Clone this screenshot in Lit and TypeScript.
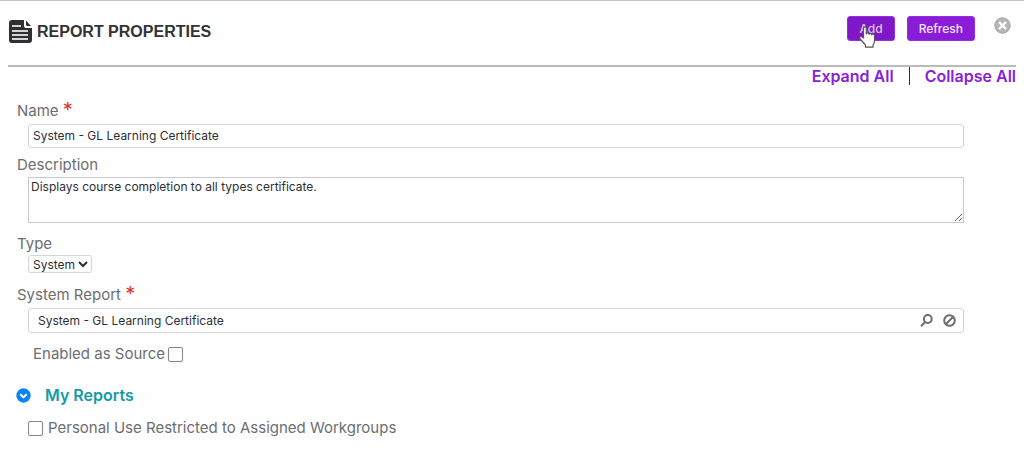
import { LitElement, html, css } from "lit";
import { customElement, state } from "lit/decorators.js";

@customElement("app-root")
class AppRoot extends LitElement {
  @state() private open = true;

  static styles = css`
    :host {
      display: block;
      min-height: 100vh;
      box-sizing: border-box;
      border-top: 1px solid #c8c8c8;
      background: #fefefe;
      color: #6c6e72;
      font-family: Inter, "Liberation Sans", sans-serif;
      font-size: 15px;
      line-height: 18px;
    }
    * { box-sizing: border-box; }
    button, input, textarea, select { font-family: inherit; margin: 0; }
    svg { display: block; }
    .header {
      display: flex;
      align-items: flex-start;
      margin: 0 8px;
      padding: 15px 4px 21px 0;
      border-bottom: 2px solid #bababa;
    }
    .title {
      display: flex;
      align-items: center;
      gap: 4px;
      flex: 1;
      margin: 3px 0 0;
      color: #333336;
      font: bold 16px/25px "Liberation Sans", Arial, sans-serif;
    }
    .actions { display: flex; align-items: flex-start; gap: 12px; }
    .btn {
      position: relative;
      height: 25px;
      padding: 0 11px;
      border: 1px solid #9330e6;
      border-radius: 3px;
      background: #8a1cd8;
      color: #f4e6ff;
      font-size: 12px;
      font-weight: 500;
    }
    .btn.pressed { background: #7f18c6; color: #dcc3f0; }
    .pointer { position: absolute; left: 10px; top: 8px; }
    .icon-btn {
      padding: 0;
      border: 0;
      background: none;
      color: #6e6e6e;
    }
    .close { margin: 1px 1px 0 7px; }
    .links {
      display: flex;
      justify-content: flex-end;
      margin-right: 8px;
      font-size: 16px;
      font-weight: 600;
      line-height: 18px;
    }
    .links a { color: #8722d6; text-decoration: none; }
    .links a + a { margin-left: 15px; padding-left: 15px; border-left: 1px solid #17375e; }
    .form { padding: 17px 60px 16px 17px; }
    .label { display: block; }
    .req {
      color: #d9342b;
      font: 20px/16px Inter, "Liberation Sans", sans-serif;
      vertical-align: top;
    }
    .control {
      display: block;
      width: calc(100% - 11px);
      margin-left: 11px;
      border: 1px solid #d4d5d8;
      border-radius: 3px;
      background: #fff;
      color: #2d2f36;
      font-size: 12px;
      outline: none;
    }
    .name { height: 24px; margin-top: 4px; margin-bottom: 8px; padding: 0 4px 2px; }
    .desc {
      height: 46px;
      margin-top: 3px;
      margin-bottom: 12px;
      padding: 1px 2px;
      border-color: #c9cacd;
      border-radius: 0;
      line-height: 16px;
      resize: vertical;
    }
    .type { width: 64px; height: 18px; margin-top: 2px; margin-bottom: 13px; padding: 0; }
    .lookup {
      display: flex;
      align-items: center;
      gap: 10px;
      height: 25px;
      margin-top: 4px;
      padding: 0 7px 0 9px;
    }
    .lookup input {
      flex: 1;
      min-width: 0;
      padding: 0;
      border: 0;
      background: none;
      color: inherit;
      font-size: 12px;
      outline: none;
    }
    .check { display: flex; align-items: center; }
    .check input {
      appearance: none;
      width: 15px;
      height: 15px;
      border: 1px solid #85868a;
      border-radius: 2px;
      background: #fff;
    }
    .check input:checked { background: #8a1cd8; }
    .source { gap: 3px; margin: 12px 0 0 16px; }
    .section {
      display: flex;
      align-items: center;
      gap: 14px;
      margin: 23px 0 15px -1px;
      font-size: 16px;
      line-height: 18px;
      font-weight: 600;
      color: #159ba5;
    }
    .personal { gap: 5px; margin-left: 11px; }
  `;

  render() {
    return html`
      <header class="header">
        <h1 class="title">
          <svg width="25" height="25" viewBox="0 0 25 25">
            <path fill="#303033" d="M4 1h12v6q0 2 2 2h6v12q0 3-3 3H4q-3 0-3-3V4q0-3 3-3z" />
            <path fill="#303033" d="M18 1.500l5 5.500h-3.500q-1.500 0-1.500-1.500z" />
            <path stroke="#d4d4d4" stroke-width="2" d="M4 7h9M4 12h16M4 16h16M4 20h16" />
          </svg>
          REPORT PROPERTIES
        </h1>
        <div class="actions">
          <button class="btn pressed" type="button">
            Add
            <svg class="pointer" width="18" height="24" viewBox="0 0 18 24" aria-hidden="true">
              <path fill="#fff" stroke="#555" stroke-width="1.200" stroke-linejoin="round"
                d="M5.500 13V3.500q0-1.700 1.400-1.700t1.400 1.700V9q0-1.200 1.300-1.200T11 9.300q.1-1 1.300-1t1.400 1.500q.3-.8 1.300-.8 1.500 0 1.500 1.700V16q0 2-1.500 4v2.200H7.500V20L1.700 13.500q-.7-1.200.5-1.800 1.100-.5 2 .3z" />
            </svg>
          </button>
          <button class="btn" type="button">Refresh</button>
          <button class="icon-btn close" type="button" aria-label="Close">
            <svg width="17" height="17" viewBox="0 0 17 17">
              <circle cx="8.500" cy="8.500" r="7.700" fill="#b6b6b6" stroke="#a2a2a2" />
              <path stroke="#fff" stroke-width="2.400" d="M5 5l7 7M12 5l-7 7" />
            </svg>
          </button>
        </div>
      </header>
      <nav class="links"><a href="#expand">Expand All</a><a href="#collapse">Collapse All</a></nav>
      <form class="form">
        <label class="label" for="name">Name <span class="req">*</span></label>
        <input class="control name" id="name" type="text" .value=${"System - GL Learning Certificate"} />
        <label class="label" for="desc">Description</label>
        <textarea class="control desc" id="desc" .value=${"Displays course completion to all types certificate."}></textarea>
        <label class="label" for="type">Type</label>
        <select class="control type" id="type"><option>System</option></select>
        <label class="label" for="report">System Report <span class="req">*</span></label>
        <div class="control lookup">
          <input id="report" type="text" .value=${"System - GL Learning Certificate"} />
          <button class="icon-btn" type="button" aria-label="Search">
            <svg width="13" height="13" viewBox="0 0 13 13" fill="none" stroke="currentColor" stroke-width="2">
              <circle cx="7.800" cy="5" r="3.900" /><path d="M5.200 8L1 12.200" />
            </svg>
          </button>
          <button class="icon-btn" type="button" aria-label="Clear">
            <svg width="13" height="13" viewBox="0 0 13 13" fill="none" stroke="currentColor" stroke-width="2">
              <circle cx="6.500" cy="6.500" r="5.300" /><path d="M3 10L10 3" />
            </svg>
          </button>
        </div>
        <div class="check source">
          <label for="source">Enabled as Source</label><input id="source" type="checkbox" />
        </div>
        <h2 class="section">
          <button class="icon-btn" type="button" aria-label="Toggle My Reports"
            aria-expanded=${this.open} @click=${() => (this.open = !this.open)}>
            <svg width="15" height="15" viewBox="0 0 15 15">
              <circle cx="7.500" cy="7.500" r="7.200" fill="#0a84f0" />
              <path d="M4.200 6.200l3.300 3 3.300-3" fill="none" stroke="#fff" stroke-width="2" />
            </svg>
          </button>
          My Reports
        </h2>
        ${this.open
          ? html`<div class="check personal">
              <input id="personal" type="checkbox" />
              <label for="personal">Personal Use Restricted to Assigned Workgroups</label>
            </div>`
          : ""}
      </form>
    `;
  }
}
